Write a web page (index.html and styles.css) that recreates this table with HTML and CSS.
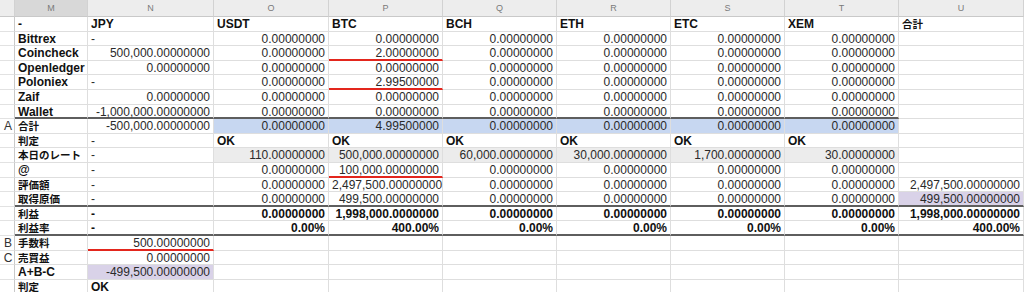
FILE: index.html
```html
<!DOCTYPE html>
<html lang="ja">
<head>
<meta charset="utf-8">
<title>Sheet</title>
<link rel="stylesheet" href="styles.css">
</head>
<body>
<div class="sheet">
  <div class="h"></div><div class="h hs">M</div><div class="h">N</div><div class="h">O</div><div class="h">P</div><div class="h">Q</div><div class="h">R</div><div class="h">S</div><div class="h">T</div><div class="h">U</div>

  <div class="n"></div><div class="c l">-</div><div class="c l">JPY</div><div class="c l">USDT</div><div class="c l">BTC</div><div class="c l">BCH</div><div class="c l">ETH</div><div class="c l">ETC</div><div class="c l">XEM</div><div class="c l ja">合計</div>

  <div class="n"></div><div class="c l">Bittrex</div><div class="c">-</div><div class="c r">0.00000000</div><div class="c r">0.00000000</div><div class="c r">0.00000000</div><div class="c r">0.00000000</div><div class="c r">0.00000000</div><div class="c r">0.00000000</div><div class="c"></div>

  <div class="n"></div><div class="c l">Coincheck</div><div class="c r">500,000.00000000</div><div class="c r">0.00000000</div><div class="c r rd">2.00000000</div><div class="c r">0.00000000</div><div class="c r">0.00000000</div><div class="c r">0.00000000</div><div class="c r">0.00000000</div><div class="c"></div>

  <div class="n"></div><div class="c l">Openledger</div><div class="c r">0.00000000</div><div class="c r">0.00000000</div><div class="c r">0.00000000</div><div class="c r">0.00000000</div><div class="c r">0.00000000</div><div class="c r">0.00000000</div><div class="c r">0.00000000</div><div class="c"></div>

  <div class="n"></div><div class="c l">Poloniex</div><div class="c">-</div><div class="c r">0.00000000</div><div class="c r rd">2.99500000</div><div class="c r">0.00000000</div><div class="c r">0.00000000</div><div class="c r">0.00000000</div><div class="c r">0.00000000</div><div class="c"></div>

  <div class="n"></div><div class="c l">Zaif</div><div class="c r">0.00000000</div><div class="c r">0.00000000</div><div class="c r">0.00000000</div><div class="c r">0.00000000</div><div class="c r">0.00000000</div><div class="c r">0.00000000</div><div class="c r">0.00000000</div><div class="c"></div>

  <div class="n"></div><div class="c l tk">Wallet</div><div class="c r tk">-1,000,000.00000000</div><div class="c r tk">0.00000000</div><div class="c r tk">0.00000000</div><div class="c r tk">0.00000000</div><div class="c r tk">0.00000000</div><div class="c r tk">0.00000000</div><div class="c r tk">0.00000000</div><div class="c"></div>

  <div class="n">A</div><div class="c l ja">合計</div><div class="c r">-500,000.00000000</div><div class="c r blue">0.00000000</div><div class="c r blue">4.99500000</div><div class="c r blue">0.00000000</div><div class="c r blue">0.00000000</div><div class="c r blue">0.00000000</div><div class="c r blue">0.00000000</div><div class="c"></div>

  <div class="n"></div><div class="c l ja">判定</div><div class="c">-</div><div class="c l">OK</div><div class="c l">OK</div><div class="c l">OK</div><div class="c l">OK</div><div class="c l">OK</div><div class="c l">OK</div><div class="c"></div>

  <div class="n"></div><div class="c l ja">本日のレート</div><div class="c">-</div><div class="c r gray">110.00000000</div><div class="c r gray">500,000.00000000</div><div class="c r gray">60,000.00000000</div><div class="c r gray">30,000.00000000</div><div class="c r gray">1,700.00000000</div><div class="c r gray">30.00000000</div><div class="c"></div>

  <div class="n"></div><div class="c l">@</div><div class="c">-</div><div class="c r">0.00000000</div><div class="c r rd">100,000.00000000</div><div class="c r">0.00000000</div><div class="c r">0.00000000</div><div class="c r">0.00000000</div><div class="c r">0.00000000</div><div class="c"></div>

  <div class="n"></div><div class="c l ja">評価額</div><div class="c">-</div><div class="c r">0.00000000</div><div class="c r">2,497,500.00000000</div><div class="c r">0.00000000</div><div class="c r">0.00000000</div><div class="c r">0.00000000</div><div class="c r">0.00000000</div><div class="c r">2,497,500.00000000</div>

  <div class="n"></div><div class="c l ja tk">取得原価</div><div class="c tk">-</div><div class="c r tk">0.00000000</div><div class="c r tk">499,500.00000000</div><div class="c r tk">0.00000000</div><div class="c r tk">0.00000000</div><div class="c r tk">0.00000000</div><div class="c r tk">0.00000000</div><div class="c r tk purple">499,500.00000000</div>

  <div class="n"></div><div class="c l ja">利益</div><div class="c l">-</div><div class="c r l">0.00000000</div><div class="c r l">1,998,000.0000000</div><div class="c r l">0.00000000</div><div class="c r l">0.00000000</div><div class="c r l">0.00000000</div><div class="c r l">0.00000000</div><div class="c r l">1,998,000.00000000</div>

  <div class="n"></div><div class="c l ja tk">利益率</div><div class="c l tk">-</div><div class="c r l tk">0.00%</div><div class="c r l tk">400.00%</div><div class="c r l tk">0.00%</div><div class="c r l tk">0.00%</div><div class="c r l tk">0.00%</div><div class="c r l tk">0.00%</div><div class="c r l tk">400.00%</div>

  <div class="n">B</div><div class="c l ja">手数料</div><div class="c r rd">500.00000000</div><div class="c"></div><div class="c"></div><div class="c"></div><div class="c"></div><div class="c"></div><div class="c"></div><div class="c"></div>

  <div class="n">C</div><div class="c l ja">売買益</div><div class="c r">0.00000000</div><div class="c"></div><div class="c"></div><div class="c"></div><div class="c"></div><div class="c"></div><div class="c"></div><div class="c"></div>

  <div class="n"></div><div class="c l">A+B-C</div><div class="c r purple">-499,500.00000000</div><div class="c"></div><div class="c"></div><div class="c"></div><div class="c"></div><div class="c"></div><div class="c"></div><div class="c"></div>

  <div class="n"></div><div class="c l ja">判定</div><div class="c l">OK</div><div class="c"></div><div class="c"></div><div class="c"></div><div class="c"></div><div class="c"></div><div class="c"></div><div class="c"></div>
</div>
</body>
</html>
```
FILE: styles.css
```css
html, body {
  margin: 0;
  padding: 0;
  background: #ffffff;
  overflow: hidden;
}

body {
  font-family: "Liberation Sans", "Noto Sans CJK JP", sans-serif;
  font-size: 12px;
  color: #2a2a2a;
}

.sheet {
  display: grid;
  grid-template-columns: 15px 73px 126px 115px 114px 114px 114px 114px 114px 125px;
  grid-template-rows: 17px;
  grid-auto-rows: 14.6px;
  width: 1024px;
}

.h {
  box-sizing: border-box;
  background: #ededed;
  border-right: 1px solid #d2d2d2;
  border-bottom: 1px solid #c9c9c9;
  color: #7a7a7a;
  font-size: 9px;
  line-height: 16px;
  text-align: center;
}

.hs {
  background: #d8d8d8;
}

.n {
  box-sizing: border-box;
  border-right: 1px solid #c9c9c9;
  border-bottom: 1px solid #e2e2e2;
  text-align: center;
  line-height: 13px;
  padding-top: 1px;
  padding-left: 2px;
  color: #333333;
}

.c {
  box-sizing: border-box;
  border-right: 1px solid #dedede;
  border-bottom: 1px solid #dedede;
  padding: 1px 3px 0 3px;
  line-height: 13px;
  white-space: nowrap;
}

.r {
  text-align: right;
}

.l {
  font-weight: bold;
  color: #111111;
}

.ja {
  font-size: 10.5px;
  font-weight: 600;
}

.blue {
  background: #c7d7f1;
}

.gray {
  background: #ececec;
}

.purple {
  background: #d9d2e8;
}

.tk {
  border-bottom: 2px solid #5e5e5e;
}

.rd {
  border-bottom: 2px solid #e3261d;
}
```
